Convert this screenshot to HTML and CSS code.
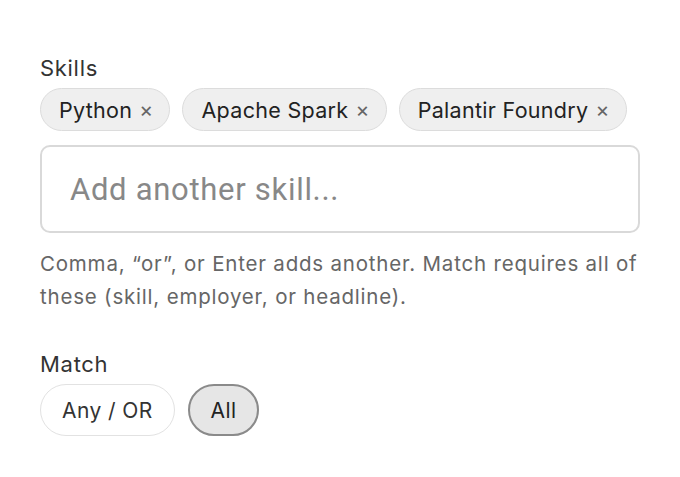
FILE: index.html
```html
<!DOCTYPE html>
<html>
<head>
<meta charset="utf-8">
<link rel="stylesheet" href="styles.css">
</head>
<body>
<div class="page">
  <section class="field">
    <div class="label">Skills</div>
    <div class="chips">
      <span class="chip">Python <span class="x">×</span></span>
      <span class="chip">Apache Spark <span class="x">×</span></span>
      <span class="chip">Palantir Foundry <span class="x">×</span></span>
    </div>
    <input class="input" type="text" placeholder="Add another skill...">
    <p class="help">Comma, “or”, or Enter adds another. Match requires all of these (skill, employer, or headline).</p>
  </section>
  <section class="field match">
    <div class="label">Match</div>
    <div class="seg">
      <button class="opt">Any / OR</button>
      <button class="opt active">All</button>
    </div>
  </section>
</div>
</body>
</html>
```
FILE: styles.css
```css
html, body {
  margin: 0;
  background: #fff;
}
body {
  font-family: Inter, "Noto Sans", sans-serif;
  color: #222;
}
.page {
  padding: 54px 40px 0 40px;
  width: 600px;
}
.label {
  font-size: 22px;
  line-height: 28px;
  letter-spacing: 0.7px;
  color: #333;
}
.chips {
  display: flex;
  flex-wrap: wrap;
  gap: 12px;
  margin-top: 6px;
}
.chip {
  display: inline-flex;
  align-items: center;
  height: 43px;
  box-sizing: border-box;
  padding: 0 16px 0 18px;
  border: 1.5px solid #dcdcdc;
  border-radius: 22px;
  background: #efefef;
  font-size: 21.5px;
  letter-spacing: 0.3px;
  color: #222;
}
.x {
  color: #666;
  font-size: 21px;
  margin-left: 7px;
}
.input {
  display: block;
  margin-top: 14px;
  width: 600px;
  height: 88px;
  box-sizing: border-box;
  border: 2px solid #d9d9d9;
  border-radius: 10px;
  padding: 0 28px;
  font-family: Roboto, sans-serif;
  font-size: 31px;
  letter-spacing: 0.7px;
  color: #222;
  outline: none;
}
.input::placeholder {
  color: #888;
}
.help {
  margin: 14px 0 0 0;
  font-size: 20.5px;
  line-height: 33px;
  letter-spacing: 0.8px;
  color: #666;
}
.match {
  margin-top: 37px;
}
.seg {
  display: flex;
  gap: 13px;
  margin-top: 6px;
}
.opt {
  height: 52px;
  box-sizing: border-box;
  padding: 0 21px;
  border-radius: 26px;
  border: 1.5px solid #e2e2e2;
  background: #fff;
  font-family: Inter, "Noto Sans", sans-serif;
  font-size: 21px;
  letter-spacing: 0.4px;
  color: #333;
}
.opt.active {
  background: #e6e6e6;
  border: 2px solid #8a8a8a;
  color: #222;
}
```
